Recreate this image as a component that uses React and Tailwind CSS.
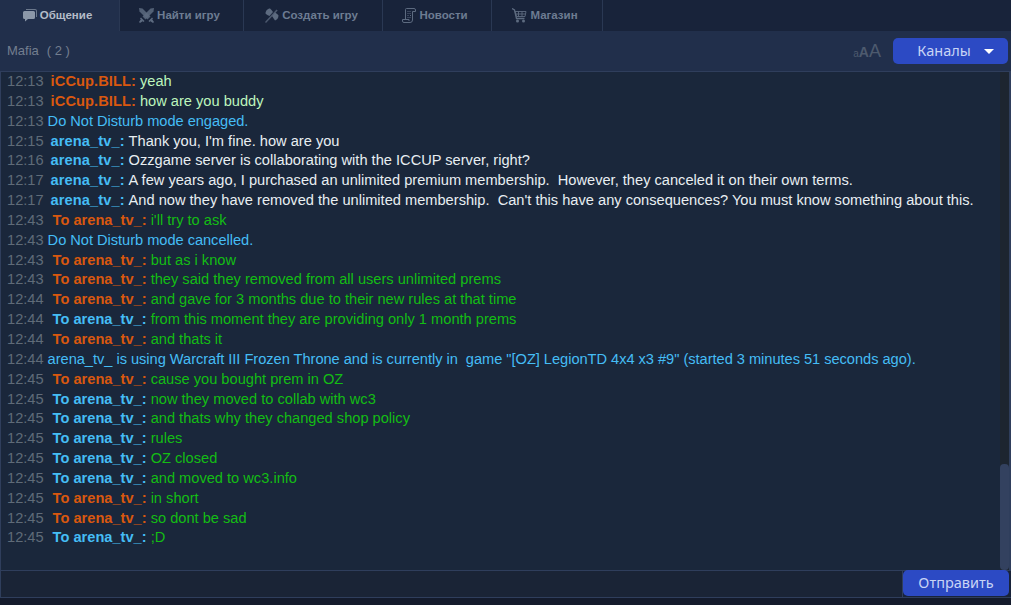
import React from 'react';

const ORANGE = 'text-[#d9580f]';
const BLUE = 'text-[#45bdf5]';
const GREEN = 'text-[#14bd14]';
const WHITE = 'text-[#e8eef2]';
const PALE = 'text-[#bdf5bd]';

const ChatIcon = () => (
  <svg width="14" height="13" viewBox="0 0 14 13" className="text-[#8b97a8]">
    <path d="M3 0h9a2 2 0 0 1 2 2v6h-1V2a1 1 0 0 0-1-1H3z" fill="currentColor" opacity="0.7" />
    <path d="M1.500 2h9A1.500 1.500 0 0 1 12 3.500v5A1.500 1.500 0 0 1 10.500 10H5l-3 2.500V10h-.5A1.500 1.500 0 0 1 0 8.500v-5A1.500 1.500 0 0 1 1.500 2z" fill="currentColor" />
  </svg>
);

const SwordsIcon = () => (
  <svg width="15" height="15" viewBox="0 0 15 15" className="text-[#5d6b80]" fill="currentColor">
    <path d="M0 0l3.500.5 8 8-3 3-8-8z" opacity="0.85" />
    <path d="M15 0l-3.500.5-8 8 3 3 8-8z" opacity="0.85" />
    <path d="M1 10.500l1-1 3.500 3.500-1 1zM14 10.500l-1-1-3.500 3.500 1 1z" />
    <path d="M0 14l2-3 2 2-3 2zM15 14l-2-3-2 2 3 2z" />
  </svg>
);

const AxeIcon = () => (
  <svg width="15" height="15" viewBox="0 0 15 15" className="text-[#5d6b80]" fill="currentColor">
    <path d="M1 14L12.500 1.500l1.200 1L2 15z" opacity="0.75" />
    <path d="M1.500 5.500C1.500 3 3.500.5 6 .5c1 1 2.500 2.500 3 3.500L5.500 8C4 7.500 2.500 6.500 1.500 5.500z" />
    <path d="M8 8l3-3.500c1 .5 2.500 1.500 3.500 3 0 2.500-1.500 4.500-3.500 5-1-1.500-2-3-3-4.500z" />
  </svg>
);

const ScrollIcon = () => (
  <svg width="14" height="15" viewBox="0 0 14 15" className="text-[#5d6b80]" fill="none" stroke="currentColor">
    <path d="M3.500 11.500V1.500a1 1 0 0 1 1-1h7.500a1.500 1.500 0 0 1 1.500 1.500v1.500h-3V12a2.500 2.500 0 0 1-2.500 2.500H2A1.500 1.500 0 0 1 .5 13v-1.500h6.500V13" />
    <path d="M5.500 3.500h3M5.500 5.500h3M5.500 7.500h1.500M8 7.500h1M5.500 9.500h3" strokeDasharray="1 1" />
  </svg>
);

const CartIcon = () => (
  <svg width="15" height="15" viewBox="0 0 15 15" className="text-[#5d6b80]" fill="none" stroke="currentColor">
    <path d="M0 .5l2.500 1.500 2 8.500h8" strokeWidth="1.300" />
    <path d="M3 3.500h11l-1 5H4.500zM6.500 3.500v5M10 3.500v5M3.500 6h10" strokeWidth="0.900" />
    <circle cx="5.500" cy="13" r="1.500" fill="currentColor" stroke="none" />
    <circle cx="11.500" cy="13" r="1.500" fill="currentColor" stroke="none" />
  </svg>
);

const tabs = [
  { label: 'Общение', icon: <ChatIcon />, width: 'w-[120px]', active: true },
  { label: 'Найти игру', icon: <SwordsIcon />, width: 'w-[124px]' },
  { label: 'Создать игру', icon: <AxeIcon />, width: 'w-[139px]' },
  { label: 'Новости', icon: <ScrollIcon />, width: 'w-[109px]' },
  { label: 'Магазин', icon: <CartIcon />, width: 'w-[111px]' },
];

const messages = [
  ['12:13', 'iCCup.BILL:', ORANGE, 'yeah', PALE],
  ['12:13', 'iCCup.BILL:', ORANGE, 'how are you buddy', PALE],
  ['12:13', null, null, 'Do Not Disturb mode engaged.', BLUE],
  ['12:15', 'arena_tv_:', BLUE, "Thank you, I'm fine. how are you", WHITE],
  ['12:16', 'arena_tv_:', BLUE, 'Ozzgame server is collaborating with the ICCUP server, right?', WHITE],
  ['12:17', 'arena_tv_:', BLUE, 'A few years ago, I purchased an unlimited premium membership.  However, they canceled it on their own terms.', WHITE],
  ['12:17', 'arena_tv_:', BLUE, "And now they have removed the unlimited membership.  Can't this have any consequences? You must know something about this.", WHITE],
  ['12:43', 'To arena_tv_:', ORANGE, "i'll try to ask", GREEN],
  ['12:43', null, null, 'Do Not Disturb mode cancelled.', BLUE],
  ['12:43', 'To arena_tv_:', ORANGE, 'but as i know', GREEN],
  ['12:43', 'To arena_tv_:', ORANGE, 'they said they removed from all users unlimited prems', GREEN],
  ['12:44', 'To arena_tv_:', ORANGE, 'and gave for 3 months due to their new rules at that time', GREEN],
  ['12:44', 'To arena_tv_:', BLUE, 'from this moment they are providing only 1 month prems', GREEN],
  ['12:44', 'To arena_tv_:', ORANGE, 'and thats it', GREEN],
  ['12:44', null, null, 'arena_tv_ is using Warcraft III Frozen Throne and is currently in  game "[OZ] LegionTD 4x4 x3 #9" (started 3 minutes 51 seconds ago).', BLUE],
  ['12:45', 'To arena_tv_:', ORANGE, 'cause you bought prem in OZ', GREEN],
  ['12:45', 'To arena_tv_:', BLUE, 'now they moved to collab with wc3', GREEN],
  ['12:45', 'To arena_tv_:', BLUE, 'and thats why they changed shop policy', GREEN],
  ['12:45', 'To arena_tv_:', BLUE, 'rules', GREEN],
  ['12:45', 'To arena_tv_:', BLUE, 'OZ closed', GREEN],
  ['12:45', 'To arena_tv_:', BLUE, 'and moved to wc3.info', GREEN],
  ['12:45', 'To arena_tv_:', ORANGE, 'in short', GREEN],
  ['12:45', 'To arena_tv_:', ORANGE, 'so dont be sad', GREEN],
  ['12:45', 'To arena_tv_:', BLUE, ';D', GREEN],
];

export default function App() {
  return (
    <div className="w-[1011px] h-[605px] flex flex-col overflow-hidden bg-[#212f4b] font-['Liberation_Sans',Arial,sans-serif]">
      {/* вкладки */}
      <div className="h-[31px] flex shrink-0 bg-[#18233a]">
        {tabs.map((tab) => (
          <div
            key={tab.label}
            className={`${tab.width} flex items-center justify-center gap-[3px] pr-[4px] border-r border-[#2a3853] text-[11.5px] font-bold ${
              tab.active ? 'bg-[#212f4b] text-[#b4bcc8]' : 'text-[#6d7c92]'
            }`}
          >
            {tab.icon}
            <span>{tab.label}</span>
          </div>
        ))}
      </div>

      {/* заголовок */}
      <div className="h-[40px] shrink-0 flex items-center justify-between pl-[7px] pr-[3px]">
        <div className="flex gap-[8px] text-[#737e8f] text-[13px]">
          <span>Mafia</span>
          <span>( 2 )</span>
        </div>
        <div className="flex items-center gap-[12px]">
          <div className="flex items-baseline text-[#4d5a6e] leading-none">
            <span className="text-[10px]">a</span>
            <span className="text-[14px] font-bold">A</span>
            <span className="text-[18px]">A</span>
          </div>
          <button className="w-[115px] h-[26px] rounded-[5px] bg-[#2c4ac4] flex items-center justify-center gap-[13px] pl-[10px] text-[14.5px] text-[#c8d4f5] font-['Noto_Sans',sans-serif]">
            <span>Каналы</span>
            <span className="w-0 h-0 border-l-[5px] border-r-[5px] border-t-[5px] border-l-transparent border-r-transparent border-t-white" />
          </button>
        </div>
      </div>

      {/* чат */}
      <div className="h-[500px] shrink-0 flex border border-[#2f3e5c] border-r-[2px] bg-[#1a273b]">
        <div className="flex-1 min-w-0 pl-[6px] text-[14.63px] leading-[19.85px] overflow-hidden">
          {messages.map(([time, name, nameColor, text, textColor], i) => (
            <div key={i} className="whitespace-pre flex">
              <span className="text-[#5f6b78]">{time}</span>
              {name ? (
                <span
                  className={`font-bold ${nameColor} ${
                    name.startsWith('To') ? 'ml-[9px]' : 'ml-[7px] tracking-[0.08px]'
                  }`}
                >
                  {name}
                </span>
              ) : null}
              <span className={`ml-[4px] ${textColor} ${name ? '' : 'tracking-[-0.03px]'}`}>{text}</span>
            </div>
          ))}
        </div>
        <div className="w-[9px] shrink-0 bg-[#1d2530] flex flex-col justify-end">
          <div className="h-[106px] rounded-[4px] bg-[#33415f]" />
        </div>
      </div>

      {/* ввод */}
      <div className="h-[26px] shrink-0 flex bg-[#18233a]">
        <div className="flex-1 bg-[#1a2436] border-x border-[#2f3e5c]" />
        <button className="w-[106px] mr-[2px] -mt-px h-[26px] rounded-[5px] bg-[#2c4ac4] text-[14.5px] text-[#c8d4f5] font-['Noto_Sans',sans-serif]">
          Отправить
        </button>
      </div>
      <div className="flex-1 bg-[#141b2c] border-t border-[#2f3e5c]" />
    </div>
  );
}
